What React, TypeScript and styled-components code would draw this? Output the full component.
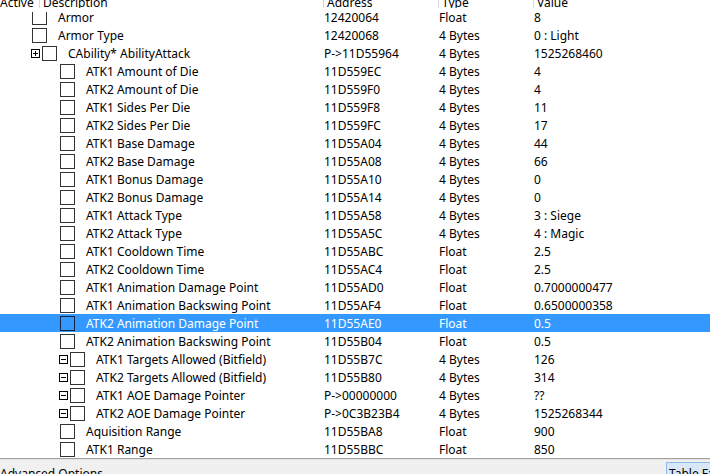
import React from "react";
import styled, { createGlobalStyle } from "styled-components";

const GlobalStyle = createGlobalStyle`
  html, body {
    margin: 0;
    padding: 0;
    background: #ffffff;
    overflow: hidden;
  }
  body {
    font-family: "Noto Sans", "Open Sans", sans-serif;
    font-size: 12px;
    color: #000;
  }
`;

interface Entry {
  desc: string;
  address: string;
  type: string;
  value: string;
  level: number;
  expander?: "plus" | "minus";
  selected?: boolean;
}

const entries: Entry[] = [
  { desc: "Armor", address: "12420064", type: "Float", value: "8", level: 0 },
  { desc: "Armor Type", address: "12420068", type: "4 Bytes", value: "0 : Light", level: 0 },
  { desc: "CAbility* AbilityAttack", address: "P->11D55964", type: "4 Bytes", value: "1525268460", level: 0, expander: "plus" },
  { desc: "ATK1 Amount of Die", address: "11D559EC", type: "4 Bytes", value: "4", level: 1 },
  { desc: "ATK2 Amount of Die", address: "11D559F0", type: "4 Bytes", value: "4", level: 1 },
  { desc: "ATK1 Sides Per Die", address: "11D559F8", type: "4 Bytes", value: "11", level: 1 },
  { desc: "ATK2 Sides Per Die", address: "11D559FC", type: "4 Bytes", value: "17", level: 1 },
  { desc: "ATK1 Base Damage", address: "11D55A04", type: "4 Bytes", value: "44", level: 1 },
  { desc: "ATK2 Base Damage", address: "11D55A08", type: "4 Bytes", value: "66", level: 1 },
  { desc: "ATK1 Bonus Damage", address: "11D55A10", type: "4 Bytes", value: "0", level: 1 },
  { desc: "ATK2 Bonus Damage", address: "11D55A14", type: "4 Bytes", value: "0", level: 1 },
  { desc: "ATK1 Attack Type", address: "11D55A58", type: "4 Bytes", value: "3 : Siege", level: 1 },
  { desc: "ATK2 Attack Type", address: "11D55A5C", type: "4 Bytes", value: "4 : Magic", level: 1 },
  { desc: "ATK1 Cooldown Time", address: "11D55ABC", type: "Float", value: "2.5", level: 1 },
  { desc: "ATK2 Cooldown Time", address: "11D55AC4", type: "Float", value: "2.5", level: 1 },
  { desc: "ATK1 Animation Damage Point", address: "11D55AD0", type: "Float", value: "0.7000000477", level: 1 },
  { desc: "ATK1 Animation Backswing Point", address: "11D55AF4", type: "Float", value: "0.6500000358", level: 1 },
  { desc: "ATK2 Animation Damage Point", address: "11D55AE0", type: "Float", value: "0.5", level: 1, selected: true },
  { desc: "ATK2 Animation Backswing Point", address: "11D55B04", type: "Float", value: "0.5", level: 1 },
  { desc: "ATK1 Targets Allowed (Bitfield)", address: "11D55B7C", type: "4 Bytes", value: "126", level: 1, expander: "minus" },
  { desc: "ATK2 Targets Allowed (Bitfield)", address: "11D55B80", type: "4 Bytes", value: "314", level: 1, expander: "minus" },
  { desc: "ATK1 AOE Damage Pointer", address: "P->00000000", type: "4 Bytes", value: "??", level: 1, expander: "minus" },
  { desc: "ATK2 AOE Damage Pointer", address: "P->0C3B23B4", type: "4 Bytes", value: "1525268344", level: 1, expander: "minus" },
  { desc: "Aquisition Range", address: "11D55BA8", type: "Float", value: "900", level: 1 },
  { desc: "ATK1 Range", address: "11D55BBC", type: "Float", value: "850", level: 1 },
];

const Window = styled.div`
  width: 710px;
  height: 474px;
  display: flex;
  flex-direction: column;
  overflow: hidden;
`;

const Header = styled.div`
  height: 12px;
  overflow: hidden;
  flex: none;
`;

const HeaderRow = styled.div`
  display: grid;
  grid-template-columns: 39px 284px 115px 95px 1fr;
  margin-top: -5px;
  height: 13px;
  line-height: 15px;
`;

const HeaderCell = styled.div<{ $first?: boolean }>`
  padding-left: ${(p) => (p.$first ? "0" : "3px")};
  border-left: ${(p) => (p.$first ? "none" : "1px solid #d8d8d8")};
  white-space: nowrap;
  overflow: hidden;
`;

const List = styled.div`
  height: 446px;
  overflow: hidden;
  flex: none;
  border-bottom: 1px solid #a0a0a0;
`;

const Rows = styled.div`
  margin-top: -4px;
`;

const Row = styled.div<{ $selected?: boolean }>`
  display: grid;
  grid-template-columns: 323px 115px 95px 1fr;
  height: 18px;
  align-items: center;
  background: ${(p) => (p.$selected ? "#3399ff" : "transparent")};
  color: ${(p) => (p.$selected ? "#ffffff" : "#000000")};
`;

const DescCell = styled.div<{ $level: number }>`
  display: flex;
  align-items: center;
  padding-left: ${(p) => 31 + p.$level * 28}px;
  white-space: nowrap;
  overflow: hidden;
`;

const Cell = styled.div`
  padding-left: 1px;
  white-space: nowrap;
  overflow: hidden;
`;

const Expander = styled.svg`
  flex: none;
  width: 9px;
  height: 9px;
  margin-right: 2px;
`;

const CheckBox = styled.span<{ $selected?: boolean; $shift: boolean }>`
  flex: none;
  box-sizing: border-box;
  width: 15px;
  height: 15px;
  margin-left: ${(p) => (p.$shift ? "0" : "1px")};
  border: 1px solid ${(p) => (p.$selected ? "#0f2440" : "#333333")};
  background: ${(p) => (p.$selected ? "transparent" : "#ffffff")};
`;

const Label = styled.span`
  margin-left: 11px;
`;

const BottomBar = styled.div`
  flex: 1;
  display: flex;
  justify-content: space-between;
  align-items: flex-start;
  background: #f0f0f0;
  border-top: 1px solid #e3e3e3;
  line-height: 18px;
  overflow: hidden;
`;

const BarText = styled.span`
  margin-top: 5px;
`;

const TableExtras = styled.span`
  width: 41px;
  margin-top: 2px;
  padding: 2px 0 0 2px;
  background: #d9e8f7;
  border-left: 1px solid #8fbbe8;
  border-top: 1px solid #8fbbe8;
  white-space: nowrap;
  overflow: hidden;
`;

const ExpanderIcon: React.FC<{ kind: "plus" | "minus" }> = ({ kind }) => (
  <Expander viewBox="0 0 9 9">
    <rect x="0.5" y="0.5" width="8" height="8" fill="#fff" stroke="#000" strokeWidth="1" />
    <line x1="2" y1="4.5" x2="7" y2="4.5" stroke="#000" strokeWidth="1" />
    {kind === "plus" && <line x1="4.5" y1="2" x2="4.5" y2="7" stroke="#000" strokeWidth="1" />}
  </Expander>
);

const App: React.FC = () => {
  return (
    <Window>
      <GlobalStyle />
      <Header>
        <HeaderRow>
          <HeaderCell $first>Active</HeaderCell>
          <HeaderCell>Description</HeaderCell>
          <HeaderCell>Address</HeaderCell>
          <HeaderCell>Type</HeaderCell>
          <HeaderCell>Value</HeaderCell>
        </HeaderRow>
      </Header>
      <List>
        <Rows>
          {entries.map((e) => (
            <Row key={e.desc} $selected={e.selected}>
              <DescCell $level={e.level}>
                {e.expander && <ExpanderIcon kind={e.expander} />}
                <CheckBox $selected={e.selected} $shift={!!e.expander} />
                <Label>{e.desc}</Label>
              </DescCell>
              <Cell>{e.address}</Cell>
              <Cell>{e.type}</Cell>
              <Cell>{e.value}</Cell>
            </Row>
          ))}
        </Rows>
      </List>
      <BottomBar>
        <BarText>Advanced Options</BarText>
        <TableExtras>Table Extras</TableExtras>
      </BottomBar>
    </Window>
  );
};

export default App;
